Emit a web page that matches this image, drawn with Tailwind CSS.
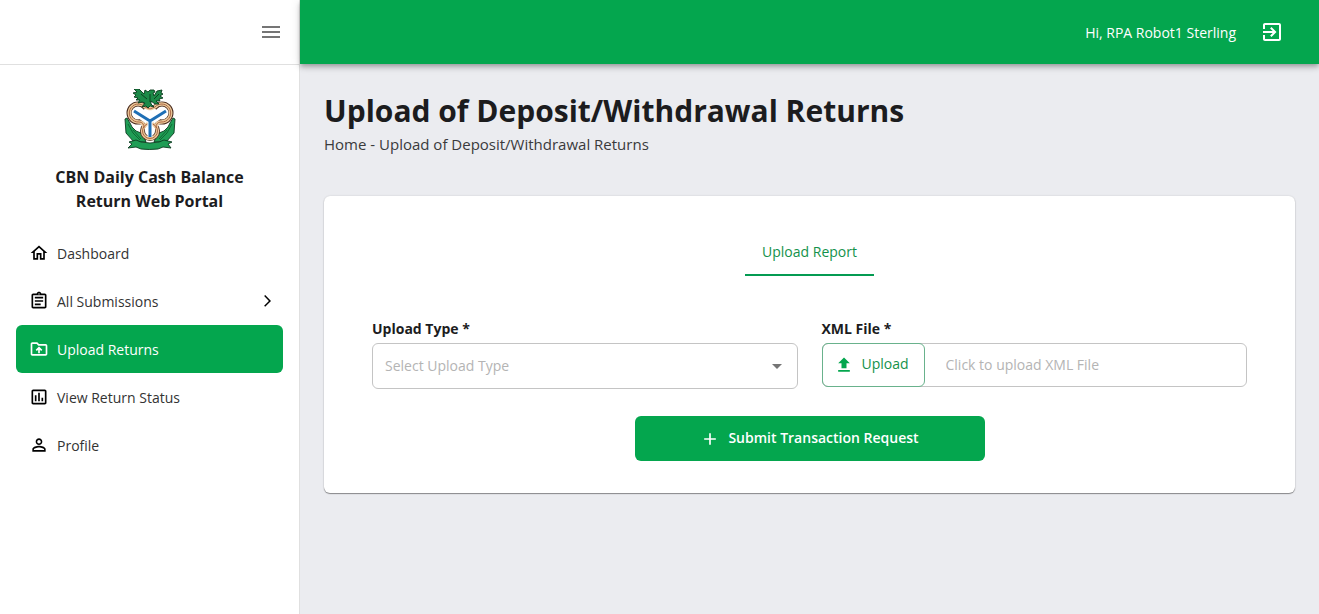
<!DOCTYPE html>
<html lang="en">
<head>
<meta charset="utf-8">
<meta name="viewport" content="width=device-width, initial-scale=1">
<title>CBN Daily Cash Balance Return Web Portal</title>
<script src="https://cdn.jsdelivr.net/npm/@tailwindcss/browser@4"></script>
</head>
<body class="flex min-h-screen bg-[#ebecf0] font-['Open_Sans',sans-serif] text-sm text-[#1c1c1e]">
<aside class="flex w-[300px] shrink-0 flex-col border-r border-[#e0e0e0] bg-white">
  <div class="flex h-[65px] items-center justify-end border-b border-[#e0e0e0] px-4">
    <button type="button" aria-label="Toggle menu" class="text-[#757575]">
      <svg class="size-6" viewBox="0 0 24 24" fill="currentColor"><path d="M3 18h18v-2H3v2zm0-5h18v-2H3v2zm0-7v2h18V6H3z"/></svg>
    </button>
  </div>
  <div class="flex flex-col items-center pt-6">
    <svg class="h-[62px] w-[52px]" viewBox="0 1 52 62" role="img" aria-label="CBN emblem">
      <g fill="#1f9d55" stroke="#0c3b20" stroke-width=".9" stroke-linejoin="round">
        <path d="M1 31l2-1 3 5 2 4 4 4 5 2 3 4 2 5H10L2 45z"/>
        <path d="M51 31l-2-1-3 5-2 4-4 4-5 2-3 4-2 5h12l8-9z"/>
        <path d="M5 54l7-2 5 2q9 2 18 0l5-2 8 2-4 2 3 4-8-1-5 2q-9 1-17 0l-5-2-8 1 4-4z"/>
      </g>
      <g fill="none">
        <path d="M4 36l5 9 7 7M9 42l8 9M48 36l-5 9-7 7M43 42l-8 9" stroke="#0c5a2c" stroke-width=".8"/>
        <g stroke="#4b2d20" stroke-width="5" fill="#fff"><circle cx="26" cy="43" r="7.500"/><circle cx="14" cy="25" r="9"/><circle cx="38" cy="25" r="9"/></g>
        <path d="M14 24l9-4h6l9 4v6l-7 5v8H21v-8l-7-5z" fill="#fff"/>
        <g stroke="#ecc99a" stroke-width="3.400"><circle cx="26" cy="43" r="7.500"/><path d="M26 21l-5-2a9 9 0 1 0-6 15q5 0 5 6M26 21l5-2a9 9 0 1 1 6 15q-5 0-5 6"/></g>
        <g stroke="#a45d3c" stroke-width=".9"><circle cx="26" cy="43" r="7.500"/><path d="M26 21l-5-2a9 9 0 1 0-6 15q5 0 5 6M26 21l5-2a9 9 0 1 1 6 15q-5 0-5 6"/></g>
        <path d="M10 23l16 10 16-10M26 32v17" stroke="#fff" stroke-width="5"/>
        <path d="M10 23l16 10 16-10M26 32v17" stroke="#1f6fb5" stroke-width="3"/>
      </g>
      <path d="M24 4l2-2 4 0 1 2-2 1 1 3 3-5 5-1-1 3 2 1-3 2 3 2-4 1 1 2-4 0 3 3-4 0-4-3 0 3 3 3-4-1-2 2-2-2-4 1 3-4-3-1-4 1 2-3-4 0 2-2-4-1 2-2-3-2 4-1-3-3 5 0 5 5 1-4z" fill="#1c8a48" stroke="#0a3a1c" stroke-width=".9" stroke-linejoin="round"/>
      <path d="M17 6l6 5M35 6l-5 5M26 6v8" fill="none" stroke="#0a3a1c" stroke-width=".9"/>
    </svg>
    <h2 class="mt-3.5 w-52 text-center text-base leading-6 font-bold">CBN Daily Cash Balance Return Web Portal</h2>
  </div>
  <nav class="mt-4 flex flex-col px-4 text-black">
    <a href="#" class="flex h-12 items-center gap-2 rounded-md px-[13px]">
      <svg class="size-5" viewBox="0 0 24 24" fill="currentColor"><path d="M12 3L2 12h3v8h6v-6h2v6h6v-8h3L12 3zm5 15h-2v-6H9v6H7v-7.810l5-4.500 5 4.500V18z"/></svg>
      <span class="pt-0.5 text-[#333]">Dashboard</span></a>
    <a href="#" class="flex h-12 items-center gap-2 rounded-md px-[13px]">
      <svg class="size-5" viewBox="0 0 24 24" fill="currentColor"><path d="M7 15h7v2H7zm0-4h10v2H7zm0-4h10v2H7zm12-4h-4.180C14.400 1.840 13.300 1 12 1c-1.300 0-2.400.840-2.820 2H5c-1.100 0-2 .900-2 2v14c0 1.100.900 2 2 2h14c1.100 0 2-.900 2-2V5c0-1.100-.900-2-2-2zm-7-.250c.410 0 .750.340.750.750s-.340.750-.750.750-.750-.340-.750-.750.340-.750.750-.750zM19 19H5V5h14v14z"/></svg>
      <span class="grow pt-0.5 text-[#333]">All Submissions</span>
      <svg class="size-5 -mr-2" viewBox="0 0 24 24" fill="currentColor"><path d="M6.230 20.230L8 22l10-10L8 2 6.230 3.770 14.460 12z" transform="translate(3 3.500) scale(.7)"/></svg></a>
    <a href="#" aria-current="page" class="flex h-12 items-center gap-2 rounded-md bg-[#04a64e] px-[13px] text-white">
      <svg class="size-5" viewBox="0 0 24 24" fill="currentColor"><path d="M20 6h-8l-2-2H4c-1.100 0-1.990.900-1.990 2L2 18c0 1.100.900 2 2 2h16c1.100 0 2-.900 2-2V8c0-1.100-.900-2-2-2zm0 12H4V6h5.170l2 2H20v10zM9.410 14.420L11 12.840V17h2v-4.160l1.590 1.590L16 13.010 12.010 9 8 13.010z"/></svg>
      <span class="pt-0.5">Upload Returns</span></a>
    <a href="#" class="flex h-12 items-center gap-2 rounded-md px-[13px]">
      <svg class="size-5" viewBox="0 0 24 24" fill="currentColor"><path d="M19 3H5c-1.100 0-2 .900-2 2v14c0 1.100.900 2 2 2h14c1.100 0 2-.900 2-2V5c0-1.100-.900-2-2-2zm0 16H5V5h14v14zM7 10h2v7H7zm4-3h2v10h-2zm4 6h2v4h-2z"/></svg>
      <span class="pt-0.5 text-[#333]">View Return Status</span></a>
    <a href="#" class="flex h-12 items-center gap-2 rounded-md px-[13px]">
      <svg class="size-5" viewBox="0 0 24 24" fill="currentColor"><path d="M12 5.900c1.160 0 2.100.940 2.100 2.100s-.940 2.100-2.100 2.100S9.900 9.160 9.900 8s.940-2.100 2.100-2.100m0 9c2.970 0 6.100 1.460 6.100 2.100v1.100H5.900V17c0-.640 3.130-2.100 6.100-2.100M12 4C9.790 4 8 5.790 8 8s1.790 4 4 4 4-1.790 4-4-1.790-4-4-4zm0 9c-2.670 0-8 1.340-8 4v3h16v-3c0-2.660-5.330-4-8-4z"/></svg>
      <span class="pt-0.5 text-[#333]">Profile</span></a>
  </nav>
</aside>
<div class="flex min-w-0 grow flex-col">
  <header class="flex h-16 items-center justify-end gap-6 bg-[#04a64e] pr-[35px] text-white shadow-[0_2px_4px_-1px_rgba(0,0,0,0.2),0_4px_5px_rgba(0,0,0,0.14),0_1px_10px_rgba(0,0,0,0.12)]">
    <span class="pt-0.5">Hi, RPA Robot1 Sterling</span>
    <button type="button" aria-label="Log out"><svg class="size-6" viewBox="0 0 24 24" fill="currentColor"><path d="M10.090 15.590L11.500 17l5-5-5-5-1.410 1.410L12.670 11H3v2h9.670l-2.580 2.590zM19 3H5c-1.110 0-2 .900-2 2v4h2V5h14v14H5v-4H3v4c0 1.100.890 2 2 2h14c1.100 0 2-.900 2-2V5c0-1.100-.900-2-2-2z"/></svg></button>
  </header>
  <main class="flex flex-col px-6 pt-6">
    <h1 class="text-3xl leading-[46px] font-bold">Upload of Deposit/Withdrawal Returns</h1>
    <p class="text-[15px] leading-5 text-[#3a3a3c]"><a href="#">Home</a> - Upload of Deposit/Withdrawal Returns</p>
    <section class="mt-[42px] flex flex-col rounded-md bg-white px-12 py-8 shadow-[0_1px_1px_rgba(0,0,0,0.4),0_0_2px_rgba(0,0,0,0.15)]">
      <div role="tablist" class="flex justify-center">
        <button type="button" role="tab" aria-selected="true" class="h-12 border-b-2 border-[#049b52] px-[17px] pt-0.5 text-[#14924b]">Upload Report</button>
      </div>
      <form class="mt-[43px] flex flex-col">
        <div class="grid grid-cols-2 gap-6">
          <div class="flex flex-col gap-1">
            <label for="type" class="leading-5 font-bold">Upload Type *</label>
            <div class="relative">
              <select id="type" class="h-[46px] w-full appearance-none rounded-md border border-[#c4c4c4] bg-white px-3 text-[#b4b4b4]"><option>Select Upload Type</option></select>
              <svg class="pointer-events-none absolute top-[11px] right-[9px] size-6 text-[#757575]" viewBox="0 0 24 24" fill="currentColor"><path d="M7 10l5 5 5-5z"/></svg>
            </div>
          </div>
          <div class="flex flex-col gap-1">
            <label for="file" class="leading-5 font-bold">XML File *</label>
            <div class="flex h-11 rounded-md border border-[#c4c4c4]">
              <button type="button" class="-m-px flex w-[103px] shrink-0 items-center gap-2 rounded-md border border-[#69b28c] pl-[11px] text-[#14924b]">
                <svg class="size-5" viewBox="0 0 24 24" fill="#04a64e"><path d="M5 20h14v-2H5v2zm0-10h4v6h6v-6h4l-7-7-7 7z"/></svg><span class="pb-0.5">Upload</span></button>
              <input id="file" type="text" placeholder="Click to upload XML File" class="min-w-0 grow bg-transparent px-[22px] outline-none placeholder:text-[#b4b4b4]">
            </div>
          </div>
        </div>
        <button type="submit" class="mt-[27px] flex h-[45px] w-[350px] items-center justify-center gap-2 self-center rounded-md bg-[#04a64e] font-semibold text-white">
          <svg class="size-5" viewBox="0 0 24 24" fill="currentColor"><path d="M19 13h-6v6h-2v-6H5v-2h6V5h2v6h6v2z"/></svg><span class="pb-0.5">Submit Transaction Request</span></button>
      </form>
    </section>
  </main>
</div>
</body>
</html>
